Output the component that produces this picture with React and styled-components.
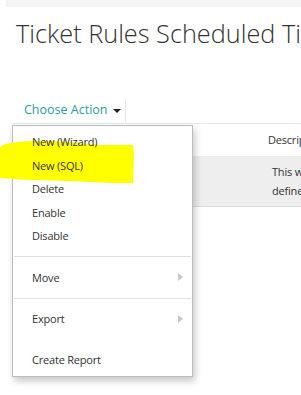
import React from 'react'
import styled, { createGlobalStyle } from 'styled-components'

const GlobalStyle = createGlobalStyle`
  html, body {
    margin: 0;
    padding: 0;
    background: #fff;
    overflow: hidden;
  }
  body {
    font-family: 'Open Sans', 'Liberation Sans', sans-serif;
    color: #333;
  }
`

const Page = styled.div`
  position: relative;
  width: 301px;
  height: 395px;
  overflow: hidden;
`

const TopStrip = styled.div`
  margin-left: 6px;
  height: 7px;
  background: #f4f4f4;
`

const Title = styled.h1`
  margin: 9px 0 0 16px;
  font-size: 25.3px;
  font-weight: 300;
  line-height: 34px;
  color: #333;
  white-space: nowrap;
`

const Toolbar = styled.div`
  display: flex;
  margin: 48px 0 0 12px;
  height: 25px;
  border-bottom: 1px solid #e6e6e6;
`

const ActionButton = styled.div`
  display: flex;
  align-items: center;
  gap: 5px;
  padding: 0 0 0 12px;
  width: 101px;
  border-right: 1px solid #e6e6e6;
  color: #2b9aa0;
  font-size: 12.5px;
  line-height: 20px;
  white-space: nowrap;
  margin-bottom: 1px;
`

const Caret = styled.span`
  flex: none;
  width: 0;
  height: 0;
  border-left: 4px solid transparent;
  border-right: 4px solid transparent;
  border-top: 4px solid #222;
  margin-top: 2px;
`

const Table = styled.div`
  display: grid;
  grid-template-columns: 252px 1fr;
  margin-left: 12px;
  font-size: 11px;
  letter-spacing: -0.2px;
  color: #333;
`

const HeadCell = styled.div`
  height: 32px;
  line-height: 32px;
  padding-left: ${(p) => p.$indent || 0}px;
  white-space: nowrap;
`

const RowCell = styled.div`
  background: #eeeeee;
  height: 51px;
  border-bottom: 1px solid #dddddd;
  padding: 6px 0 0 ${(p) => p.$indent || 0}px;
  box-sizing: border-box;
  line-height: 19px;
  white-space: nowrap;
`

const Menu = styled.div`
  position: absolute;
  left: 12px;
  top: 125px;
  width: 179px;
  padding: 4px 0;
  background: #fff;
  border: 1px solid #bdbdbd;
  box-shadow: 2px 4px 7px rgba(0, 0, 0, 0.22);
  font-size: 11px;
  letter-spacing: -0.2px;
  color: #333;
`

const Item = styled.div`
  position: relative;
  z-index: 3;
  display: flex;
  align-items: center;
  justify-content: space-between;
  height: 23.5px;
  padding: 0 9px 0 19px;
`

const SubArrow = styled.span`
  width: 0;
  height: 0;
  border-top: 4px solid transparent;
  border-bottom: 4px solid transparent;
  border-left: 5px solid #c8c8c8;
`

const Separator = styled.div`
  height: 1px;
  margin: 8.5px 1px 8.5px 1px;
  background: #e2e2e2;
`

const Spacer = styled.div`
  height: 17.5px;
`

const Highlight = styled.svg`
  position: absolute;
  left: 0;
  top: 135px;
  z-index: 2;
`

const App = () => {
  return (
    <Page>
      <GlobalStyle />
      <TopStrip />
      <Title>Ticket Rules Scheduled Tickets</Title>
      <Toolbar>
        <ActionButton>
          Choose Action <Caret />
        </ActionButton>
      </Toolbar>
      <Table>
        <HeadCell>Name</HeadCell>
        <HeadCell $indent={4}>Description</HeadCell>
        <RowCell>Rule</RowCell>
        <RowCell $indent={8}>
          This will run tickets
          <br />
          defined by the rule
        </RowCell>
      </Table>
      <Menu>
        <Item>New (Wizard)</Item>
        <Item>New (SQL)</Item>
        <Item>Delete</Item>
        <Item>Enable</Item>
        <Item>Disable</Item>
        <Separator />
        <Item>
          Move <SubArrow />
        </Item>
        <Separator />
        <Item>
          Export <SubArrow />
        </Item>
        <Spacer />
        <Item>Create Report</Item>
      </Menu>
      <Highlight width='140' height='52' viewBox='0 0 140 52'>
        <path
          d='M0 12 C4 9 8 8 12 8 C22 6 30 6 40 6 C60 6 80 8 100 10 C115 10 125 10 133 10 L134 20 L133 48 C120 48 105 48 90 47 C70 46 50 45 30 45 C18 44 8 44 0 43 Z'
          fill='#ffff00'
        />
      </Highlight>
    </Page>
  )
}

export default App
